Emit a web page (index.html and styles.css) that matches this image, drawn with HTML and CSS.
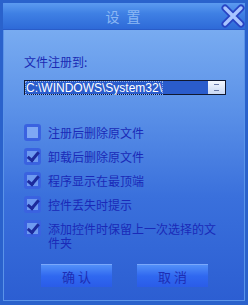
FILE: index.html
```html
<!DOCTYPE html>
<html lang="zh-CN">
<head>
    <meta charset="UTF-8">
    <title>设置</title>
    <link rel="stylesheet" href="styles.css">
</head>
<body>
    <div class="window">
        <div class="titlebar">
            <span class="title">设&nbsp;置</span>
            <svg class="close" width="24" height="24" viewBox="0 0 24 24">
                <path d="M4 4 L20 20 M20 4 L4 20" stroke="#2844c4" stroke-width="7" stroke-linecap="round"/>
                <path d="M4 4 L20 20 M20 4 L4 20" stroke="#a8c4ff" stroke-width="3.5" stroke-linecap="round"/>
            </svg>
        </div>
        <div class="content">
            <div class="label">文件注册到:</div>
            <div class="combo">
                <div class="combo-value"><span>C:\WINDOWS\System32\</span></div>
                <div class="combo-btn">
                    <i></i><i></i>
                </div>
            </div>

            <ul class="options">
                <li><span class="box"></span><span>注册后删除原文件</span></li>
                <li><span class="box checked"></span><span>卸载后删除原文件</span></li>
                <li><span class="box checked"></span><span>程序显示在最顶端</span></li>
                <li><span class="box checked"></span><span>控件丢失时提示</span></li>
                <li><span class="box checked"></span><span>添加控件时保留上一次选择的文件夹</span></li>
            </ul>

            <div class="buttons">
                <button>确&nbsp;认</button>
                <button>取&nbsp;消</button>
            </div>
        </div>
    </div>
</body>
</html>
```

FILE: styles.css
```css
body {
    margin: 0;
    background: #2a5cd0;
    font-family: "Noto Sans CJK SC", "Liberation Sans", sans-serif;
}

.window {
    width: 248px;
    height: 305px;
    box-sizing: border-box;
    border: 3px solid #2a62cc;
    border-bottom-width: 4px;
    box-shadow: inset 1px 1px 0 #5b94e8, inset -1px -1px 0 #5b94e8;
    background: linear-gradient(#82b4f4 0%, #5c92e8 35%, #3a70dc 65%, #2c5ed2 100%);
    display: flex;
    flex-direction: column;
}

.titlebar {
    height: 26px;
    flex: none;
    display: flex;
    align-items: center;
    justify-content: center;
    position: relative;
    background: linear-gradient(#5c9af0 0%, #3f80e4 40%, #2e6ad8 100%);
    border-bottom: 1px solid #2a5cc8;
    border-radius: 3px 3px 0 0;
}

.title {
    color: #8cb8f4;
    font-size: 14px;
    letter-spacing: 2px;
}

.close {
    position: absolute;
    right: 0;
    top: 1px;
}

.content {
    padding: 25px 20px 0 21px;
    display: flex;
    flex-direction: column;
}

.label {
    color: #1a2ab4;
    font-size: 12px;
    line-height: 14px;
}

.combo {
    margin-top: 11px;
    height: 15px;
    width: 202px;
    box-sizing: border-box;
    border: 1px solid #101830;
    display: flex;
    background: #2a5ccc;
}

.combo-value {
    flex: 1;
    padding: 0 1px;
    display: flex;
    align-items: center;
}

.combo-value span {
    color: #ffffff;
    font-family: "Liberation Sans", sans-serif;
    font-size: 12px;
    line-height: 12px;
    outline: 1px dotted #8cb0f0;
}

.combo-btn {
    width: 17px;
    background: linear-gradient(#f4f8ff, #c8d8f4);
    display: flex;
    flex-direction: column;
    align-items: center;
    justify-content: center;
    gap: 5px;
}

.combo-btn i {
    display: block;
    width: 5px;
    height: 1px;
    background: #6a7aa8;
}

.options {
    list-style: none;
    margin: 29px 0 0 0;
    padding: 0;
    display: flex;
    flex-direction: column;
    gap: 7px;
}

.options li {
    display: flex;
    align-items: flex-start;
    gap: 7px;
    color: #1a2ab8;
    font-size: 12px;
    line-height: 14px;
    width: 200px;
}

.options li span:last-child {
    padding-top: 2px;
}

.box {
    flex: none;
    width: 17px;
    height: 17px;
    box-sizing: border-box;
    border: 3px solid #3a62e0;
    border-radius: 3px;
    background: #7ea8f4;
    position: relative;
}

.box.checked {
    background: #6e9af0;
}

.box.checked::after {
    content: "";
    position: absolute;
    left: 2px;
    top: -2px;
    width: 4px;
    height: 9px;
    border: solid #1c2a9c;
    border-width: 0 3px 3px 0;
    transform: rotate(40deg) translate(1px, 0);
}

.buttons {
    margin-top: 14px;
    display: flex;
    gap: 25px;
    padding-left: 17px;
}

.buttons button {
    width: 71px;
    height: 23px;
    border: none;
    border-top: 1px solid #7aa8fc;
    background: linear-gradient(#5290f8, #3068f0 50%, #2a5ce8);
    color: #1e2eb4;
    font-family: "Noto Sans CJK SC", sans-serif;
    font-size: 13px;
    padding: 0;
}
```
